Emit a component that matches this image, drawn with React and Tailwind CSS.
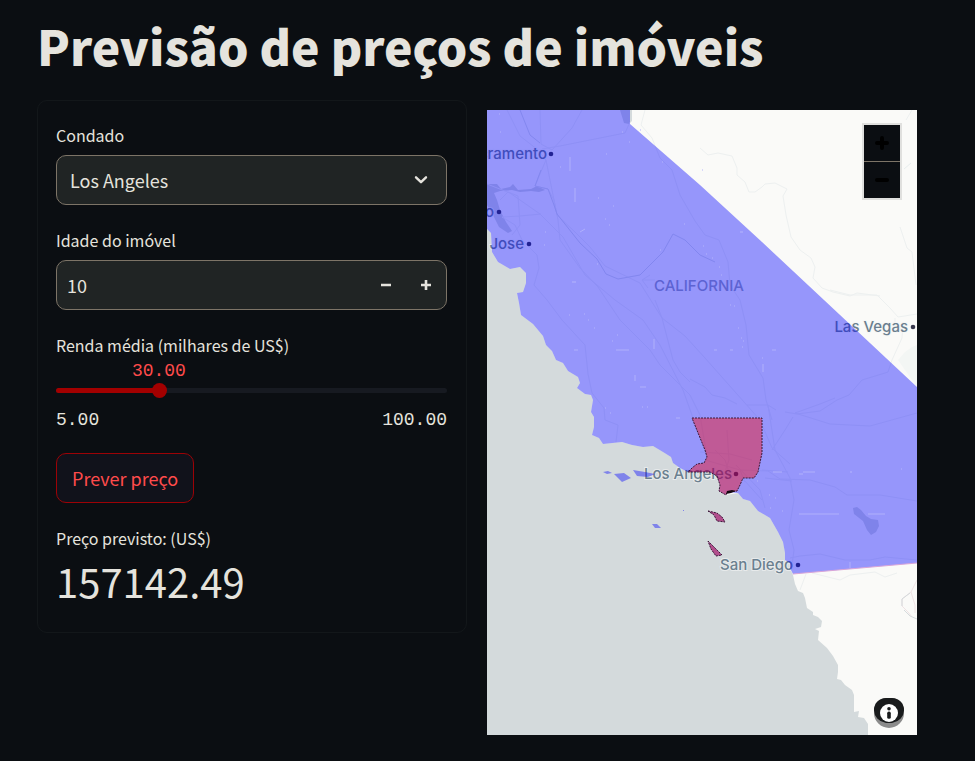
import { useState } from "react";

const STATE =
  "M487 110H630V124L700 185L762 242L824 300L917 387V563L793 574L790 568V563L785 560V553L783 542L778 532L770 518L758 511L750 501L743 499L738 493L727 492L726 495L719 491L720 485L717 476L710 472H688L680 468L673 463L671 457L663 452L653 446L643 447L632 445L622 442L603 444L599 438L592 435L594 427V417L591 412L593 400L591 395L585 394L577 388L580 383L578 377L568 371L563 363L556 360L552 351L546 345L543 336L533 324L521 315L519 303L517 293L523 292L526 283V273L520 267L510 269L498 262L492 252L491 233L487 229Z";

const CHANNEL_ISLANDS =
  "M603 472L608 471L612 473L607 474Z M614 474L624 473L631 478L622 482Z M633 470L645 472L655 474L648 477L637 476Z M652 524L657 524L661 528L655 528Z M683 510h1v1h-1Z";

const COUNTY_MAINLAND =
  "M692 418H762V453L758 472L754 478H743L740 485L737 491L727 492L726 495L719 491L720 485L717 476L710 472H688L692 468L697 464L704 463L707 457L705 450Z";

const COUNTY_ISLANDS =
  "M708 511L717 513L722 517L725 522L717 521L714 515Z M708 541L713 546L722 555L716 556L711 549Z";

const OCEAN =
  "M487 229L491 233L492 252L498 262L510 269L520 267L526 273V283L523 292L517 293L519 303L521 315L533 324L543 336L546 345L552 351L556 360L563 363L568 371L578 377L580 383L577 388L585 394L591 395L593 400L591 412L594 417V427L592 435L599 438L603 444L622 442L632 445L643 447L653 446L663 452L671 457L673 463L680 468L688 472H710L717 476L720 485L719 491L726 495L738 493L743 499L750 501L758 511L770 518L778 532L783 542L785 553V560L790 563V568L793 575L795 584L798 591L803 593L805 598L807 608L813 612V615L818 617L822 621L821 627L815 629L819 631L818 640L827 648L833 656L838 665V672L837 679L841 680L845 685L852 690L854 695V712L859 711L858 717L864 718L868 724V735H487Z";

const LAKES =
  "M620 110H632V121L629 124L624 123Z M487 184L497 184L501 189L510 187L513 184L518 190L531 189L537 186L541 188L545 190L539 192L531 191L520 192L512 190L500 191L494 193L497 200L500 210L506 222L512 231L508 233L499 227L493 215L487 205Z M853 508L857 507L861 510L866 516L871 519L878 520L879 526L876 532L871 535L867 530L863 521L854 514Z";

const ROADS = [
  "M507 110L520 136L538 150L546 160L552 190L558 220L560 240L580 268L598 287L620 320L650 350L660 365L690 395L700 415L707 457",
  "M540 110L541 144L552 150L572 128L582 110",
  "M542 149L560 146L600 138L625 133L630 122",
  "M546 160L540 174L535 186L548 189L554 200L557 215L575 232L590 247L605 266L640 283L662 318L685 336L705 358L760 420L772 448L790 464",
  "M487 184L510 193L540 214L563 237L585 275L615 300L643 320L660 345L683 390L693 418",
  "M541 214L520 216L502 217L515 225L522 240L537 255L539 268L534 285L547 300L562 320L585 345L588 374L592 393L604 408L605 420L618 425L616 442",
  "M500 200L508 192L518 196L520 225L512 235",
  "M655 300L662 318L673 360L680 372L690 382",
  "M655 280L642 280M642 280L650 275M642 280L648 288",
  "M645 110L641 125L652 138L660 158L672 170L680 195L695 221L705 235L719 240L728 262L730 285L740 300L746 325L749 355L763 378L766 400L772 420",
  "M690 379L705 387L712 395L725 398L737 404M747 405H768L776 410M785 412L797 414L820 411L837 400L849 395L862 380L885 373L888 372L892 360L902 338L903 322",
  "M795 413L830 424L870 426L917 413",
  "M768 405L775 450L790 478L794 500L789 530L794 550L792 565",
  "M772 450L785 430L793 417M795 413L820 404L835 398",
  "M705 460L740 470L768 471L780 479L810 480L835 487L847 495L880 495L917 501",
  "M715 450L725 460L730 475M700 452L730 454L752 460M727 430L729 460L722 480M740 470L745 482M736 465L760 490L765 508M744 480L762 500M762 470L788 472M765 478L792 481",
  "M790 558L800 556L820 554L845 560L870 560L885 557L917 560",
  "M700 148L708 155L718 153L732 156L737 168V175L745 182L749 192H755L762 187L765 184L775 183L787 189L783 196L786 215L791 237L800 250L811 258L815 267L813 278L822 288L833 292L850 296L857 293L880 296",
  "M830 290L850 295L877 295L890 308L898 317L917 314M895 318V324L903 330",
  "M900 227L907 248L912 252L916 285M906 120L912 110",
  "M806 574L800 590M812 573L840 580L850 575L875 572L885 577L897 573",
];

const SPECKS =
  "M570 157v14M575 188v14M616 350h13M654 339v10M635 375v6M574 350h4M640 387h6M580 232l5-3M799 514h40M868 514h17M773 472h9M803 472h12M799 474h4M850 562v6M676 418h4M763 364v8M714 350h3M730 350h3M772 350h4";

const DOTS =
  "M500 132h1M499 114h1M560 167h1M622 132h1M629 142h1M640 130h1M662 162h1M606 154h1M545 232h1M598 198h1M613 206h1M605 219h1M609 225h1M544 245h1M597 264h1M572 282h4M660 250h1M684 224h1M702 170h1M740 232h3M703 246h1M706 254h1M712 258h1M719 267h1M721 275h1M569 315h1M584 314h1M588 320h1M594 328h1M617 335h1M612 341h1M605 408h1M610 413h1M642 407h1M647 407h1M769 495h1M775 498h1M782 511h1M770 508h1M757 481h1M901 469h1M850 472h2M730 305h1M734 306h1M738 328h1M741 338h1M743 341h1M742 347h1M762 358h1";

function CityLabel({ x, y, children, dotX, dotY }) {
  return (
    <g>
      <text
        x={x}
        y={y}
        textAnchor="end"
        fill="#6b7f8f"
        stroke="#f4f6f6"
        strokeOpacity="0.6"
        strokeWidth="2"
        paintOrder="stroke"
        className="font-[Inter,sans-serif] text-[15px] font-medium"
      >
        {children}
      </text>
      <circle cx={dotX} cy={dotY} r="2.3" fill="#39394d" />
    </g>
  );
}

function CaliforniaMap() {
  return (
    <svg
      viewBox="487 110 430 625"
      preserveAspectRatio="xMidYMid slice"
      className="block h-[625px] w-full"
      role="img"
      aria-label="Mapa da Califórnia"
    >
      <rect x="0" y="0" width="1400" height="1000" fill="#fafaf8" />
      <path d="M898 360L905 352L912 347L917 345V387Z" fill="#f3f6f4" />
      <path d={OCEAN} fill="#d4dadc" />
      <path d={LAKES} fill="#d4dadc" />
      <g fill="none" stroke="#edf0f0" strokeWidth="1">
        {ROADS.map((d) => (
          <path key={d} d={d} />
        ))}
      </g>
      <path
        d="M520 110L530 135L540 143M541 170L535 186L548 189L554 205L557 214L580 243L597 259L606 274L618 279L640 275L653 262L663 252L673 234L685 240L700 255L715 262"
        fill="none"
        stroke="#d9e0e4"
      />
      <path d="M904 169L911 163" stroke="#e8eeee" />
      <path
        d="M912 617L908 612L902 606L902 599L911 592L917 580M911 592L915 605V613"
        fill="none"
        stroke="#eee2e4"
      />
      <path d="M902 606L902 599L910 593M904 610L910 616L917 619" fill="none" stroke="#d4dadc" />

      <CityLabel x={547} y={159} dotX={551} dotY={154}>Sacramento</CityLabel>
      <CityLabel x={494} y={217} dotX={499} dotY={212}>San Francisco</CityLabel>
      <CityLabel x={524} y={249} dotX={529} dotY={244}>San Jose</CityLabel>
      <CityLabel x={732} y={479} dotX={736} dotY={474}>Los Angeles</CityLabel>
      <CityLabel x={793} y={570} dotX={798} dotY={565}>San Diego</CityLabel>
      <CityLabel x={908} y={332} dotX={913} dotY={327}>Las Vegas</CityLabel>
      <text
        x="699"
        y="291"
        textAnchor="middle"
        fill="#9aa5b4"
        className="font-[Inter,sans-serif] text-[15px] font-medium"
      >
        CALIFORNIA
      </text>

      <path d={`${STATE} ${CHANNEL_ISLANDS} ${COUNTY_ISLANDS}`} fill="#0000ff" fillOpacity="0.4" />
      <path d="M793 574L917 563" stroke="#d9a5d8" strokeWidth="1" />
      <path d={SPECKS} fill="none" stroke="#b0b0fb" strokeWidth="1" />
      <path d={DOTS} fill="none" stroke="#b4b4fb" strokeWidth="1" />
      <path
        d={`${COUNTY_MAINLAND} ${COUNTY_ISLANDS}`}
        fill="#ff0000"
        fillOpacity="0.4"
        stroke="#3c1838"
        strokeWidth="1"
        strokeDasharray="2 1"
      />
      <path d="M726 494L727 491L732 490L736 491L731 493Z" fill="#140810" />
    </svg>
  );
}

export default function App() {
  const [county, setCounty] = useState("Los Angeles");
  const [age, setAge] = useState(10);
  const [income, setIncome] = useState(30);
  const percent = ((income - 5) / 95) * 100;

  return (
    <main className="min-h-screen bg-[#0b0e12] pr-[58px] pl-[37px] font-['Noto_Sans_CJK_JP',sans-serif] text-[#e5e3dd]">
      <h1 className="pt-3 text-[48px] leading-[66px] font-black">Previsão de preços de imóveis</h1>
      <div className="mt-[22px] grid grid-cols-2 items-start gap-5">
        <form
          className="rounded-[10px] border border-[#13171a] pt-[22px] pr-[19px] pb-6 pl-[18px]"
          onSubmit={(e) => e.preventDefault()}
        >
          <label htmlFor="county" className="block text-[16px] leading-6">Condado</label>
          <div className="mt-2 grid items-center">
            <select
              id="county"
              value={county}
              onChange={(e) => setCounty(e.target.value)}
              className="col-start-1 row-start-1 h-[50px] w-full appearance-none rounded-[10px] border border-[#7d7467] bg-[#202424] px-[13px] text-[18px] outline-none"
            >
              <option>Los Angeles</option>
              <option>San Diego</option>
              <option>Sacramento</option>
            </select>
            <svg
              viewBox="0 0 14 10"
              className="pointer-events-none col-start-1 row-start-1 mr-[19px] h-[10px] w-[14px] justify-self-end"
              fill="none"
              stroke="#e5e3dd"
              strokeWidth="2.4"
              strokeLinecap="round"
              strokeLinejoin="round"
            >
              <path d="M2 2.3L7 7.2L12 2.3" />
            </svg>
          </div>

          <label htmlFor="age" className="mt-[23px] block text-[16px] leading-6">Idade do imóvel</label>
          <div className="mt-2 flex h-[50px] overflow-hidden rounded-[10px] border border-[#7d7467] bg-[#202424]">
            <input
              id="age"
              type="number"
              value={age}
              onChange={(e) => setAge(Number(e.target.value))}
              className="min-w-0 flex-1 [appearance:textfield] bg-transparent px-[10px] text-[18px] outline-none [&::-webkit-inner-spin-button]:appearance-none"
            />
            <button type="button" aria-label="Diminuir" onClick={() => setAge(age - 1)} className="flex w-10 items-center justify-center">
              <svg viewBox="0 0 10 10" className="size-[10px]" stroke="#e5e3dd" strokeWidth="2.6">
                <path d="M0 5H10" />
              </svg>
            </button>
            <button type="button" aria-label="Aumentar" onClick={() => setAge(age + 1)} className="flex w-10 items-center justify-center">
              <svg viewBox="0 0 10 10" className="size-[10px]" stroke="#e5e3dd" strokeWidth="2.6">
                <path d="M0 5H10M5 0V10" />
              </svg>
            </button>
          </div>

          <label htmlFor="income" className="mt-[23px] block text-[16px] leading-6">Renda média (milhares de US$)</label>
          <div className="pt-[2px] font-['Liberation_Mono',monospace] text-[18px] leading-6">
            <div className="flex text-[#ff4b4b]">
              <output htmlFor="income" className="-translate-x-1/2" style={{ marginLeft: `${percent}%` }}>
                {income.toFixed(2)}
              </output>
            </div>
            <div className="grid items-center">
              <div className="col-start-1 row-start-1 h-[5px] overflow-hidden rounded-full bg-[#171a21]">
                <div className="h-full bg-[#a30000]" style={{ width: `${percent}%` }} />
              </div>
              <input
                id="income"
                type="range"
                min="5"
                max="100"
                value={income}
                onChange={(e) => setIncome(Number(e.target.value))}
                className="col-start-1 row-start-1 -mx-[7px] h-[15px] appearance-none bg-transparent outline-none [&::-webkit-slider-thumb]:size-[15px] [&::-webkit-slider-thumb]:appearance-none [&::-webkit-slider-thumb]:rounded-full [&::-webkit-slider-thumb]:bg-[#a30000]"
              />
            </div>
            <div className="mt-[10px] flex justify-between">
              <span>5.00</span>
              <span>100.00</span>
            </div>
          </div>

          <button
            type="submit"
            className="mt-[21px] h-[50px] rounded-[10px] border border-[#9c0206] bg-[#11121b] px-[15px] text-[18px] text-[#ff4b4b]"
          >
            Prever preço
          </button>

          <p className="mt-[23px] text-[16px] leading-6">Preço previsto: (US$)</p>
          <p className="mt-1 text-[40px] leading-[54px]">157142.49</p>
        </form>

        <div className="relative mt-[10px] overflow-hidden">
          <CaliforniaMap />
          <div className="absolute top-[15px] right-[17px] flex w-9 flex-col bg-[#0b0e12] shadow-[0_0_0_2px_rgba(0,0,0,0.1)]">
            <button type="button" aria-label="Aproximar" className="flex h-[37px] items-center justify-center border-b border-[#7d7467]">
              <svg viewBox="0 0 14 14" className="size-[14px]" stroke="#000" strokeWidth="4" strokeLinecap="round">
                <path d="M2 7H12M7 2V12" />
              </svg>
            </button>
            <button type="button" aria-label="Afastar" className="flex h-9 items-center justify-center">
              <svg viewBox="0 0 14 14" className="size-[14px]" stroke="#000" strokeWidth="4" strokeLinecap="round">
                <path d="M2 7H12" />
              </svg>
            </button>
          </div>
          <button type="button" aria-label="Atribuição" className="absolute right-[13px] bottom-[7px]">
            <svg viewBox="0 0 30 30" className="size-[30px]">
              <path d="M0 12A12 12 0 0 1 12 0H18A12 12 0 0 1 30 12V15A15 15 0 0 1 0 15Z" fill="#8b8b8b" />
              <path d="M0 12A12 12 0 0 1 12 0H18A12 12 0 0 1 30 12A15 13 0 0 1 18 25H12A15 13 0 0 1 0 12Z" fill="#191b1c" />
              <circle cx="15" cy="15" r="9" fill="#fff" />
              <circle cx="15" cy="10.7" r="1.8" fill="#191b1c" />
              <rect x="13.2" y="13.6" width="3.6" height="7.2" rx="1.6" fill="#191b1c" />
            </svg>
          </button>
        </div>
      </div>
    </main>
  );
}
